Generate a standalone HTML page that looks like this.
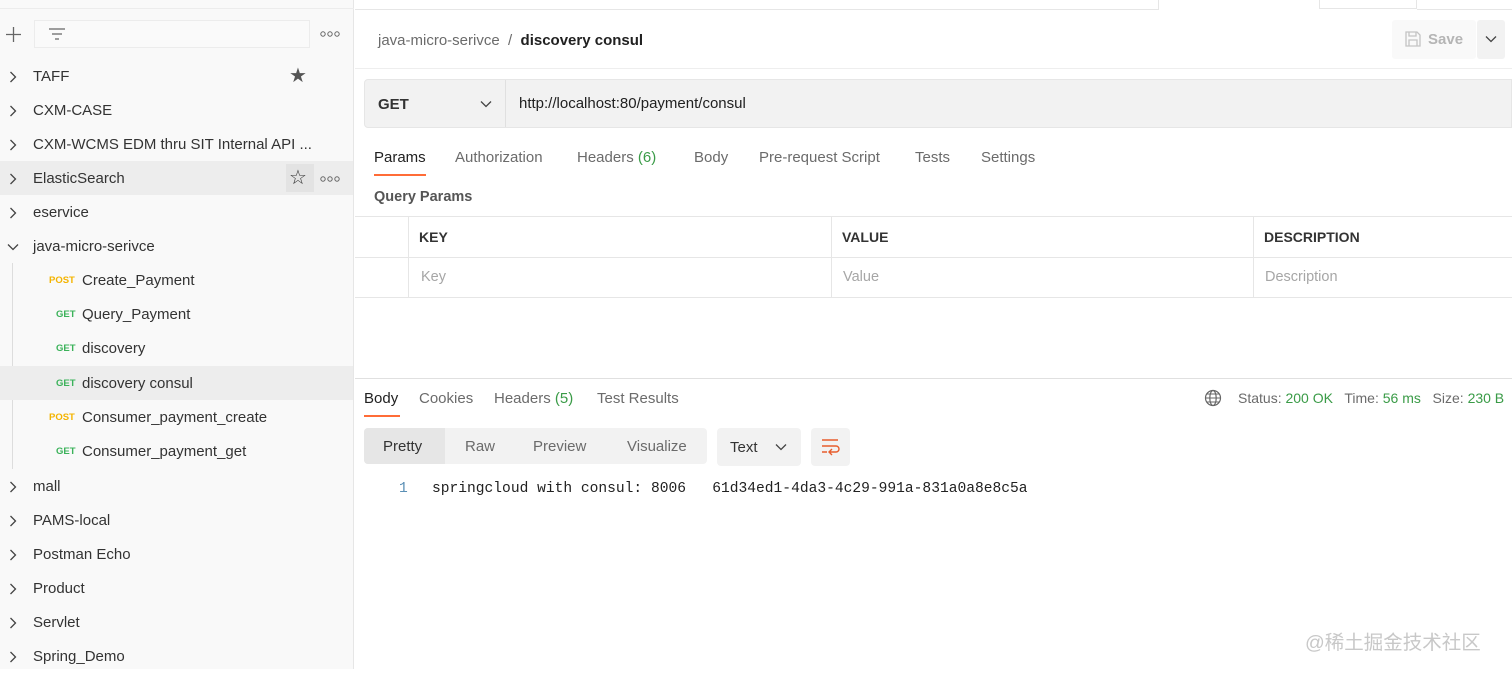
<!DOCTYPE html>
<html><head><meta charset="utf-8"><style>
*{box-sizing:border-box;margin:0;padding:0}
body{width:1512px;height:669px;overflow:hidden;background:#fff;font-family:"Liberation Sans",sans-serif;color:#212121;font-size:14px;position:relative}
.abs{position:absolute}
#side{left:0;top:0;width:354px;height:669px;background:#f9f9f9;border-right:1px solid #e6e6e6}
.row{position:absolute;left:0;width:353px;height:34px;line-height:36px;font-size:15px;color:#333}
.row .chev{position:absolute;left:9px;top:12px}
.row .t{position:absolute;left:33px}
.m{font-size:9.5px;font-weight:bold;position:absolute}
.post{color:#f4b400}.get{color:#3bb25a}
.tab{position:absolute;top:149px;font-size:15px;color:#6b6b6b}
.th{position:absolute;top:229px;font-size:14px;font-weight:bold;color:#333}
.ph{position:absolute;top:269px;font-size:14.5px;color:#a6a6a6}
</style></head><body>
<svg width="0" height="0" style="position:absolute"><defs>
<symbol id="cr" viewBox="0 0 8 12"><path d="M1.5 1l5 5-5 5" fill="none" stroke="#444" stroke-width="1.3"/></symbol>
<symbol id="cd" viewBox="0 0 12 8"><path d="M1 1.5l5 5 5-5" fill="none" stroke="#444" stroke-width="1.3"/></symbol>
<symbol id="dots" viewBox="0 0 20 6"><circle cx="3" cy="3" r="2.2" fill="none" stroke="#666" stroke-width="1"/><circle cx="10" cy="3" r="2.2" fill="none" stroke="#666" stroke-width="1"/><circle cx="17" cy="3" r="2.2" fill="none" stroke="#666" stroke-width="1"/></symbol>
</defs></svg>
<div id="side" class="abs">
 <div class="abs" style="left:0;top:8px;width:354px;border-top:1px solid #ececec"></div>
 <svg class="abs" style="left:6px;top:27px" width="15" height="15"><path d="M7.5 0v15M0 7.5h15" stroke="#666" stroke-width="1.3"/></svg>
 <div class="abs" style="left:34px;top:20px;width:276px;height:28px;border:1px solid #ececec;background:#fafafa"></div>
 <svg class="abs" style="left:48px;top:27px" width="18" height="14"><path d="M1 2h16M4 7h10M7 12h4" stroke="#666" stroke-width="1.3"/></svg>
 <svg class="abs" style="left:320px;top:31px" width="20" height="6"><use href="#dots"/></svg>
 <div class="row" style="top:59px"><svg class="chev" width="8" height="12"><use href="#cr"/></svg><span class="t">TAFF</span><span class="abs" style="left:289px;top:-1px;font-size:20px;color:#555">★</span></div>
 <div class="row" style="top:93px"><svg class="chev" width="8" height="12"><use href="#cr"/></svg><span class="t">CXM-CASE</span></div>
 <div class="row" style="top:127px"><svg class="chev" width="8" height="12"><use href="#cr"/></svg><span class="t">CXM-WCMS EDM thru SIT Internal API ...</span></div>
 <div class="row" style="top:161px;background:#ededed"><svg class="chev" width="8" height="12"><use href="#cr"/></svg><span class="t">ElasticSearch</span><span class="abs" style="left:286px;top:3px;width:28px;height:28px;background:#e3e3e3"></span><span class="abs" style="left:289px;top:-1px;font-size:20px;color:#333">☆</span><svg class="abs" style="left:320px;top:15px" width="20" height="6"><use href="#dots"/></svg></div>
 <div class="row" style="top:195px"><svg class="chev" width="8" height="12"><use href="#cr"/></svg><span class="t">eservice</span></div>
 <div class="row" style="top:229px"><svg class="chev" style="left:7px;top:14px" width="12" height="8"><use href="#cd"/></svg><span class="t">java-micro-serivce</span></div>
 <div class="abs" style="left:12px;top:263px;width:1px;height:206px;background:#ddd"></div>
 <div class="row" style="top:263px"><span class="m post" style="left:49px">POST</span><span class="t" style="left:82px">Create_Payment</span></div>
 <div class="row" style="top:297px"><span class="m get" style="left:56px">GET</span><span class="t" style="left:82px">Query_Payment</span></div>
 <div class="row" style="top:331px"><span class="m get" style="left:56px">GET</span><span class="t" style="left:82px">discovery</span></div>
 <div class="row" style="top:366px;background:#ededed"><span class="m get" style="left:56px">GET</span><span class="t" style="left:82px">discovery consul</span></div>
 <div class="row" style="top:400px"><span class="m post" style="left:49px">POST</span><span class="t" style="left:82px">Consumer_payment_create</span></div>
 <div class="row" style="top:434px"><span class="m get" style="left:56px">GET</span><span class="t" style="left:82px">Consumer_payment_get</span></div>
 <div class="row" style="top:469px"><svg class="chev" width="8" height="12"><use href="#cr"/></svg><span class="t">mall</span></div>
 <div class="row" style="top:503px"><svg class="chev" width="8" height="12"><use href="#cr"/></svg><span class="t">PAMS-local</span></div>
 <div class="row" style="top:537px"><svg class="chev" width="8" height="12"><use href="#cr"/></svg><span class="t">Postman Echo</span></div>
 <div class="row" style="top:571px"><svg class="chev" width="8" height="12"><use href="#cr"/></svg><span class="t">Product</span></div>
 <div class="row" style="top:605px"><svg class="chev" width="8" height="12"><use href="#cr"/></svg><span class="t">Servlet</span></div>
 <div class="row" style="top:639px"><svg class="chev" width="8" height="12"><use href="#cr"/></svg><span class="t">Spring_Demo</span></div>
</div>
<!-- top tabs -->
<div class="abs" style="left:355px;top:9px;width:804px;border-top:1px solid #e6e6e6"></div>
<div class="abs" style="left:1158px;top:0;width:1px;height:9px;background:#e6e6e6"></div>
<div class="abs" style="left:1319px;top:0;width:98px;height:9px;border-left:1px solid #e6e6e6;border-right:1px solid #e6e6e6;border-bottom:1px solid #e6e6e6"></div>
<div class="abs" style="left:1417px;top:9px;width:95px;border-top:1px solid #e6e6e6"></div>
<div class="abs" style="left:378px;top:32px;font-size:15px;color:#6b6b6b">java-micro-serivce&nbsp; /&nbsp; <span style="color:#212121;font-weight:bold">discovery consul</span></div>
<div class="abs" style="left:1392px;top:20px;width:84px;height:39px;background:#f9f9f9;border-radius:3px"></div>
<svg class="abs" style="left:1404px;top:30px" width="18" height="18"><path d="M2 2h11l3 3v11H2z M5 2v4h7V2 M5 16v-6h8v6" fill="none" stroke="#c4c4c4" stroke-width="1.3"/></svg>
<div class="abs" style="left:1428px;top:31px;font-size:15px;color:#b5b5b5;font-weight:bold">Save</div>
<div class="abs" style="left:1477px;top:20px;width:28px;height:39px;background:#f2f2f2;border-radius:3px"></div>
<svg class="abs" style="left:1485px;top:35px" width="12" height="8"><use href="#cd"/></svg>
<div class="abs" style="left:355px;top:68px;width:1157px;border-top:1px solid #eee"></div>
<!-- URL bar -->
<div class="abs" style="left:364px;top:79px;width:1148px;height:49px;background:#f2f2f2;border:1px solid #e6e6e6;border-radius:4px 0 0 4px"></div>
<div class="abs" style="left:505px;top:80px;width:1px;height:47px;background:#e0e0e0"></div>
<div class="abs" style="left:378px;top:96px;font-size:15px;font-weight:bold;color:#333">GET</div>
<svg class="abs" style="left:480px;top:100px" width="12" height="8"><use href="#cd"/></svg>
<div class="abs" style="left:519px;top:95px;font-size:15px;color:#212121">http://localhost:80/payment/consul</div>
<!-- req tabs -->
<div class="tab" style="left:374px;color:#212121">Params</div>
<div class="abs" style="left:374px;top:174px;width:52px;height:2px;background:#ff6c37"></div>
<div class="tab" style="left:455px">Authorization</div>
<div class="tab" style="left:577px">Headers <span style="color:#3a9b47">(6)</span></div>
<div class="tab" style="left:694px">Body</div>
<div class="tab" style="left:759px">Pre-request Script</div>
<div class="tab" style="left:915px">Tests</div>
<div class="tab" style="left:981px">Settings</div>
<div class="abs" style="left:374px;top:189px;font-size:14.5px;font-weight:bold;color:#555">Query Params</div>
<div class="abs" style="left:355px;top:216px;width:1157px;border-top:1px solid #e6e6e6"></div>
<div class="abs" style="left:355px;top:257px;width:1157px;border-top:1px solid #e6e6e6"></div>
<div class="abs" style="left:355px;top:297px;width:1157px;border-top:1px solid #e6e6e6"></div>
<div class="abs" style="left:408px;top:216px;width:1px;height:81px;background:#e6e6e6"></div>
<div class="abs" style="left:831px;top:216px;width:1px;height:81px;background:#e6e6e6"></div>
<div class="abs" style="left:1253px;top:216px;width:1px;height:81px;background:#e6e6e6"></div>
<div class="th" style="left:419px">KEY</div><div class="th" style="left:842px">VALUE</div><div class="th" style="left:1264px">DESCRIPTION</div>
<div class="ph" style="left:421px">Key</div><div class="ph" style="left:843px">Value</div><div class="ph" style="left:1265px">Description</div>
<!-- response -->
<div class="abs" style="left:355px;top:378px;width:1157px;border-top:1px solid #e0e0e0"></div>
<div class="tab" style="top:390px;left:364px;color:#212121">Body</div>
<div class="abs" style="left:364px;top:415px;width:36px;height:2px;background:#ff6c37"></div>
<div class="tab" style="top:390px;left:419px">Cookies</div>
<div class="tab" style="top:390px;left:494px">Headers <span style="color:#3a9b47">(5)</span></div>
<div class="tab" style="top:390px;left:597px">Test Results</div>
<svg class="abs" style="left:1204px;top:389px" width="18" height="18"><circle cx="9" cy="9" r="7.5" fill="none" stroke="#666" stroke-width="1.2"/><ellipse cx="9" cy="9" rx="3.2" ry="7.5" fill="none" stroke="#666" stroke-width="1.2"/><path d="M1.5 9h15M3 5h12M3 13h12" stroke="#666" stroke-width="1"/></svg>
<div class="abs" style="left:1238px;top:390px;font-size:14px;color:#6b6b6b;white-space:nowrap">Status: <span style="color:#3a9b47">200 OK</span>&nbsp;&nbsp; Time: <span style="color:#3a9b47">56 ms</span>&nbsp;&nbsp; Size: <span style="color:#3a9b47">230 B</span></div>
<div class="abs" style="left:364px;top:428px;width:343px;height:36px;background:#f2f2f2;border-radius:4px"></div>
<div class="abs" style="left:364px;top:428px;width:81px;height:36px;background:#e6e6e6;border-radius:4px 0 0 4px"></div>
<div class="abs" style="left:383px;top:438px;font-size:15px;color:#333">Pretty</div>
<div class="abs" style="left:465px;top:438px;font-size:15px;color:#6b6b6b">Raw</div>
<div class="abs" style="left:533px;top:438px;font-size:15px;color:#6b6b6b">Preview</div>
<div class="abs" style="left:627px;top:438px;font-size:15px;color:#6b6b6b">Visualize</div>
<div class="abs" style="left:717px;top:428px;width:84px;height:38px;background:#f2f2f2;border-radius:4px"></div>
<div class="abs" style="left:730px;top:439px;font-size:15px;color:#333">Text</div>
<svg class="abs" style="left:775px;top:443px" width="12" height="8"><use href="#cd"/></svg>
<div class="abs" style="left:811px;top:428px;width:39px;height:38px;background:#f2f2f2;border-radius:4px"></div>
<svg class="abs" style="left:820px;top:437px" width="20" height="20"><path d="M2 3h16M2 9h14a3 3 0 0 1 0 6h-6M2 15h5M12 12l-3 3 3 3" fill="none" stroke="#e85d2c" stroke-width="1.4"/></svg>
<div class="abs" style="left:399px;top:481px;font-family:'Liberation Mono',monospace;font-size:14.6px;color:#5a8fb5">1</div>
<div class="abs" style="left:432px;top:481px;font-family:'Liberation Mono',monospace;font-size:14.6px;color:#212121;white-space:pre">springcloud with consul: 8006   61d34ed1-4da3-4c29-991a-831a0a8e8c5a</div>
<div class="abs" style="left:1305px;top:626px;font-size:19.5px;color:#c8c8c8;font-family:'Liberation Sans','Noto Sans CJK SC',sans-serif;white-space:nowrap">@稀土掘金技术社区</div>
</body></html>
